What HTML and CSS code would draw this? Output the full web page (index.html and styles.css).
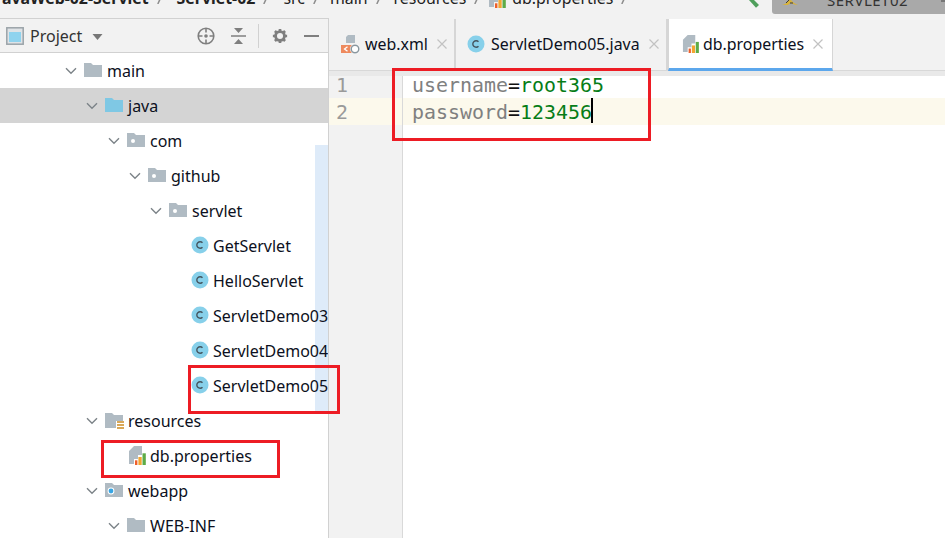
FILE: index.html
```html
<!DOCTYPE html>
<html lang="en">
<head>
<meta charset="utf-8">
<title>db.properties</title>
<link rel="stylesheet" href="styles.css">
</head>
<body>
<svg class="defs" width="0" height="0" aria-hidden="true">
  <defs>
    <symbol id="folder" viewBox="0 0 18 15"><path d="M0 1h7l2 2h9v12H0z" fill="#b0bbc3"/></symbol>
    <symbol id="pkg" viewBox="0 0 18 15"><path d="M0 1h7l2 2h9v12H0z" fill="#b0bbc3"/><circle cx="6" cy="9" r="2" fill="#fff"/></symbol>
    <symbol id="src" viewBox="0 0 18 15"><path d="M0 1h7l2 2h9v12H0z" fill="#7fc8e4"/></symbol>
    <symbol id="web" viewBox="0 0 18 15"><path d="M0 1h7l2 2h9v12H0z" fill="#b0bbc3"/><circle cx="6" cy="9" r="3.400" fill="#fff"/><circle cx="6" cy="9" r="2.400" fill="#36a5e4"/></symbol>
    <symbol id="res" viewBox="0 0 19 18"><path d="M0 1h7l2 2h9v6h-7v7H0z" fill="#b0bbc3"/><path d="M12 9h7v2h-7zM12 12h7v2h-7zM12 15h7v2h-7z" fill="#d9a858"/></symbol>
    <symbol id="cls" viewBox="0 0 18 18"><circle cx="9" cy="9" r="8.500" fill="#87d0ea"/><path d="M11.500 6.700a3.300 3.300 0 1 0 0 4.600" fill="none" stroke="#44545e" stroke-width="1.400"/></symbol>
    <symbol id="prop" viewBox="0 0 17 19"><path d="M5 0h8v9H9v4H5v5H0V5z" fill="#b0bbc3"/><path d="M6 14.300h2.400V19H6z" fill="#ee5f2a"/><path d="M9.400 11h3.300v8H9.400z" fill="#f2a531"/><path d="M13.500 7.300h3.300V19h-3.300z" fill="#5dab47"/></symbol>
    <symbol id="chev" viewBox="0 0 12 8"><path d="M1 1.200l5 5 5-5" fill="none" stroke="#7c8388" stroke-width="1.400"/></symbol>
    <symbol id="close" viewBox="0 0 10 10"><path d="M.5.5l9 9M9.500.5l-9 9" fill="none" stroke="#c2c2c2" stroke-width="1.200"/></symbol>
    <symbol id="sep" viewBox="0 0 6 12"><path d="M.8 12L5 3" fill="none" stroke="#8c8c8c" stroke-width="1.500"/></symbol>
  </defs>
</svg>

<header class="topbar">
  <nav class="crumbs">
    <b class="crumb">avaWeb-02-Servlet</b><svg class="sep sep-wide"><use href="#sep"/></svg>
    <b class="crumb">Servlet-02</b><svg class="sep sep-bold"><use href="#sep"/></svg>
    <span class="crumb">src</span><svg class="sep sep-src"><use href="#sep"/></svg>
    <span class="crumb">main</span><svg class="sep"><use href="#sep"/></svg>
    <span class="crumb">resources</span><svg class="sep sep-res"><use href="#sep"/></svg>
    <svg class="crumb-icon"><use href="#prop"/></svg><span class="crumb">db.properties</span><svg class="sep"><use href="#sep"/></svg>
  </nav>
  <svg class="hammer" viewBox="0 0 10 8"><path d="M0 0h5l5 5-3 2.800z" fill="#4f9f5c"/></svg>
  <div class="run-config">
    <svg class="run-icon" viewBox="0 0 16 5"><path d="M0 5q5-1 7-5h2q2 3 7 5-4 0-7-2-2 1-3 2z" fill="#d8b23a"/><path d="M4 3l3-3M8 3h3" stroke="#3d3d3d" stroke-width="1"/></svg>
    <span class="run-name">SERVLET02</span>
    <span class="run-caret"></span>
  </div>
</header>

<main class="workspace">
  <aside class="sidebar">
    <div class="panel-head">
      <svg class="panel-icon" viewBox="0 0 18 18"><rect x=".8" y=".8" width="16.400" height="16.400" fill="#dfe3e6" stroke="#9aa3a8" stroke-width="1.500"/><rect x="3" y="5" width="12" height="10" fill="#8fd3ee"/></svg>
      <span class="panel-title">Project</span>
      <svg class="caret" viewBox="0 0 10 6"><path d="M0 0h10L5 6z" fill="#777"/></svg>
      <span class="panel-spacer"></span>
      <svg class="tool" viewBox="0 0 18 18"><circle cx="9" cy="9" r="7.800" fill="none" stroke="#7f7f7f" stroke-width="1.600"/><circle cx="9" cy="9" r="1.800" fill="#7f7f7f"/><path d="M9 1v4.500M9 12.500V17M1 9h4.500M12.500 9H17" stroke="#7f7f7f" stroke-width="1.600"/></svg>
      <svg class="tool tool-collapse" viewBox="0 0 15 16"><path d="M0 8h15" stroke="#7f7f7f" stroke-width="1.500"/><path d="M3 0h9L7.500 5zM3 16h9l-4.500-5z" fill="#7f7f7f"/></svg>
      <span class="tool-div"></span>
      <svg class="tool tool-gear" viewBox="0 0 18 18"><circle cx="9" cy="9" r="5" fill="none" stroke="#7f7f7f" stroke-width="3.200"/><path d="M9 1v3M9 14v3M1 9h3M14 9h3M3.300 3.300l2.200 2.200M12.500 12.500l2.200 2.200M14.700 3.300l-2.200 2.200M5.500 12.500l-2.200 2.200" stroke="#7f7f7f" stroke-width="3"/></svg>
      <svg class="tool tool-min" viewBox="0 0 15 2"><path d="M0 1h15" stroke="#7f7f7f" stroke-width="2"/></svg>
    </div>
    <div class="tree">
      <span class="scroll-mark"></span>
      <div class="row d3"><svg class="chev"><use href="#chev"/></svg><svg class="ic"><use href="#folder"/></svg><span class="label">main</span></div>
      <div class="row d4 selected"><svg class="chev"><use href="#chev"/></svg><svg class="ic"><use href="#src"/></svg><span class="label">java</span></div>
      <div class="row d5"><svg class="chev"><use href="#chev"/></svg><svg class="ic"><use href="#pkg"/></svg><span class="label">com</span></div>
      <div class="row d6"><svg class="chev"><use href="#chev"/></svg><svg class="ic"><use href="#pkg"/></svg><span class="label">github</span></div>
      <div class="row d7"><svg class="chev"><use href="#chev"/></svg><svg class="ic"><use href="#pkg"/></svg><span class="label">servlet</span></div>
      <div class="row d8"><svg class="ic-c"><use href="#cls"/></svg><span class="label">GetServlet</span></div>
      <div class="row d8"><svg class="ic-c"><use href="#cls"/></svg><span class="label">HelloServlet</span></div>
      <div class="row d8"><svg class="ic-c"><use href="#cls"/></svg><span class="label">ServletDemo03</span></div>
      <div class="row d8"><svg class="ic-c"><use href="#cls"/></svg><span class="label">ServletDemo04</span></div>
      <div class="row d8"><svg class="ic-c"><use href="#cls"/></svg><span class="label">ServletDemo05</span></div>
      <div class="row d4"><svg class="chev"><use href="#chev"/></svg><svg class="ic ic-res"><use href="#res"/></svg><span class="label tight">resources</span></div>
      <div class="row d5-file"><svg class="ic-p"><use href="#prop"/></svg><span class="label">db.properties</span></div>
      <div class="row d4"><svg class="chev"><use href="#chev"/></svg><svg class="ic"><use href="#web"/></svg><span class="label">webapp</span></div>
      <div class="row d5"><svg class="chev"><use href="#chev"/></svg><svg class="ic"><use href="#folder"/></svg><span class="label">WEB-INF</span></div>
    </div>
  </aside>

  <section class="editor">
    <div class="tabs">
      <div class="tab tab-xml">
        <svg class="tab-ic tab-ic-xml" viewBox="0 0 19 19"><path d="M7 0h7v8H5V2z" fill="#b0bbc3"/><path d="M0 10h12v8H0z" fill="#ee8a5e"/><path d="M6.500 11.800L3.500 14l3 2.200" fill="none" stroke="#fff" stroke-width="1.300"/><circle cx="14" cy="14" r="5" fill="#fff"/><circle cx="14" cy="14" r="3.800" fill="none" stroke="#8a979f" stroke-width="1.500"/></svg>
        <span class="tab-label">web.xml</span><svg class="tab-x"><use href="#close"/></svg>
      </div>
      <div class="tab tab-java">
        <svg class="tab-ic"><use href="#cls"/></svg>
        <span class="tab-label">ServletDemo05.java</span><svg class="tab-x"><use href="#close"/></svg>
      </div>
      <div class="tab active">
        <svg class="tab-ic"><use href="#prop"/></svg>
        <span class="tab-label">db.properties</span><svg class="tab-x"><use href="#close"/></svg>
      </div>
    </div>
    <div class="code">
      <div class="gutter">
        <div class="ln">1</div>
        <div class="ln current">2</div>
      </div>
      <div class="lines">
        <div class="line"><span class="key">username</span>=<span class="val">root365</span></div>
        <div class="line current"><span class="key">password</span>=<span class="val">123456</span><span class="cursor"></span></div>
      </div>
    </div>
  </section>
</main>

<div class="mark mark-code"></div>
<div class="mark mark-class"></div>
<div class="mark mark-file"></div>
</body>
</html>
```

FILE: styles.css
```css
* { box-sizing: border-box; }
html, body { height: 100%; }
body {
  margin: 0;
  width: 945px;
  height: 538px;
  overflow: hidden;
  position: relative;
  display: flex;
  flex-direction: column;
  background: #f2f2f2;
  color: #0c1021;
  font-family: "Noto Sans", "Open Sans", sans-serif;
  font-size: 16px;
}
.defs { position: absolute; }

.topbar {
  flex: none;
  height: 18px;
  display: flex;
  overflow: hidden;
}
.crumbs {
  flex: none;
  width: 749px;
  height: 24px;
  margin-top: -14px;
  padding-left: 2px;
  display: flex;
  align-items: center;
  line-height: 24px;
  white-space: nowrap;
  font-size: 15.900px;
}
.crumb { color: #222; }
.sep { width: 6px; height: 12px; margin: 0 12px 0 8px; flex: none; }
.sep-wide { margin-right: 14px; }
.sep-bold { margin-right: 14px; }
.sep-src { margin-right: 11px; }
.sep-res { margin-right: 9px; }
.crumb-icon { width: 17px; height: 19px; margin-right: 6px; flex: none; }
.hammer { width: 10px; height: 8px; flex: none; }
.run-config {
  flex: none;
  width: 173px;
  height: 14px;
  margin-left: 13px;
  background: #a9a9a9;
  border-bottom-left-radius: 3px;
  display: flex;
  align-items: flex-end;
  padding-left: 10px;
  overflow: hidden;
  position: relative;
}
.run-icon { width: 16px; height: 5px; flex: none; align-self: flex-start; }
.run-name { margin-left: 29px; font-size: 15px; line-height: 14px; margin-bottom: 7px; color: #333; letter-spacing: .5px; }
.run-caret {
  position: absolute;
  right: 0;
  top: 0;
  width: 4px;
  height: 2px;
  background: #777;
}

.workspace { flex: 1; display: flex; min-height: 0; }

.sidebar {
  flex: none;
  width: 329px;
  border-right: 1px solid #d1d1d1;
  display: flex;
  flex-direction: column;
}
.panel-head {
  flex: none;
  height: 35px;
  display: flex;
  align-items: center;
  padding: 0 9px 0 6px;
  border-top: 1px solid #d1d1d1;
  border-bottom: 1px solid #d1d1d1;
}
.panel-icon { width: 18px; height: 18px; flex: none; }
.panel-title { margin-left: 6px; color: #333; }
.caret { width: 11px; height: 6px; margin: 3px 0 0 10px; }
.panel-spacer { flex: 1; }
.tool { width: 18px; height: 18px; flex: none; }
.tool-collapse { width: 15px; height: 16px; margin-left: 16px; }
.tool-div { width: 1px; height: 24px; background: #d1d1d1; margin-left: 12px; }
.tool-gear { width: 16px; height: 16px; margin-left: 13px; }
.tool-min { width: 15px; height: 2px; margin-left: 16px; }

.tree { flex: 1; background: #fff; position: relative; overflow: hidden; }
.scroll-mark {
  position: absolute;
  right: 0;
  top: 92px;
  width: 13px;
  height: 268px;
  background: #deebf9;
}
.row {
  height: 35px;
  display: flex;
  align-items: center;
  position: relative;
  white-space: nowrap;
}
.selected { background: #d4d4d4; }
.d3 { padding-left: 65px; }
.d4 { padding-left: 86px; }
.d5 { padding-left: 108px; }
.d6 { padding-left: 129px; }
.d7 { padding-left: 150px; }
.d8 { padding-left: 191px; }
.d5-file { padding-left: 129px; }
.chev { width: 12px; height: 8px; flex: none; }
.ic { width: 18px; height: 15px; margin-left: 7px; flex: none; margin-top: -3px; }
.ic-res { width: 19px; height: 18px; margin-top: 0; }
.ic-c { width: 18px; height: 18px; flex: none; margin-top: -1px; }
.ic-p { width: 17px; height: 19px; flex: none; }
.label { margin-left: 5px; color: #0c1021; line-height: 22px; }
.tight { margin-left: 4px; }
.d8 .label, .d5-file .label { margin-left: 4px; }

.editor { flex: 1; display: flex; flex-direction: column; min-width: 0; }
.tabs {
  flex: none;
  height: 53px;
  padding-top: 1px;
  display: flex;
  align-items: flex-start;
  border-bottom: 1px solid #d8d8d8;
  font-size: 15.900px;
}
.tab {
  height: 51px;
  padding-bottom: 2px;
  display: flex;
  align-items: center;
  border-right: 2px solid #d6d6d6;
  white-space: nowrap;
}
.tab-xml { width: 127px; padding-left: 12px; }
.tab-java { width: 212px; padding-left: 11px; }
.tab-ic { width: 18px; height: 18px; flex: none; }
.tab-ic-xml { width: 19px; height: 19px; margin-top: 2px; }
.tab-label { margin-left: 5px; color: #0c1021; }
.tab-java .tab-label { margin-left: 6px; }
.tab-x { width: 10px; height: 10px; margin-left: 9px; flex: none; }
.tab.active {
  width: 165px;
  height: 52px;
  padding-left: 13px;
  padding-bottom: 0;
  background: #fff;
  border-left: 1px solid #d6d6d6;
  border-right: 1px solid #d6d6d6;
  border-bottom: 3px solid #5ca7ec;
}
.active .tab-label { margin-left: 3px; }

.code { flex: 1; display: flex; background: #fff; position: relative; }
.code::before {
  content: "";
  position: absolute;
  left: 0;
  right: 0;
  top: 0;
  height: 5px;
  background: #e9e9e9;
}
.gutter {
  flex: none;
  width: 74px;
  background: #f2f2f2;
  border-right: 1px solid #d9d9d9;
}
.lines { flex: 1; }
.ln, .line {
  height: 27px;
  line-height: 29px;
  font-family: "DejaVu Sans Mono", monospace;
  font-size: 19.930px;
  position: relative;
}
.ln { padding-left: 7px; color: #9a9a9a; }
.line { padding-left: 9px; color: #111; }
.current { background: #fcf9ec; }
.key { color: #808080; }
.val { color: #067d17; }
.cursor {
  position: absolute;
  left: 188px;
  top: 0;
  width: 2px;
  height: 25px;
  background: #000;
}

.mark { position: absolute; border: 3px solid #ed1c24; }
.mark-code { left: 392px; top: 68px; width: 259px; height: 73px; }
.mark-class { left: 188px; top: 365px; width: 152px; height: 49px; }
.mark-file { left: 101px; top: 440px; width: 179px; height: 38px; }
```
